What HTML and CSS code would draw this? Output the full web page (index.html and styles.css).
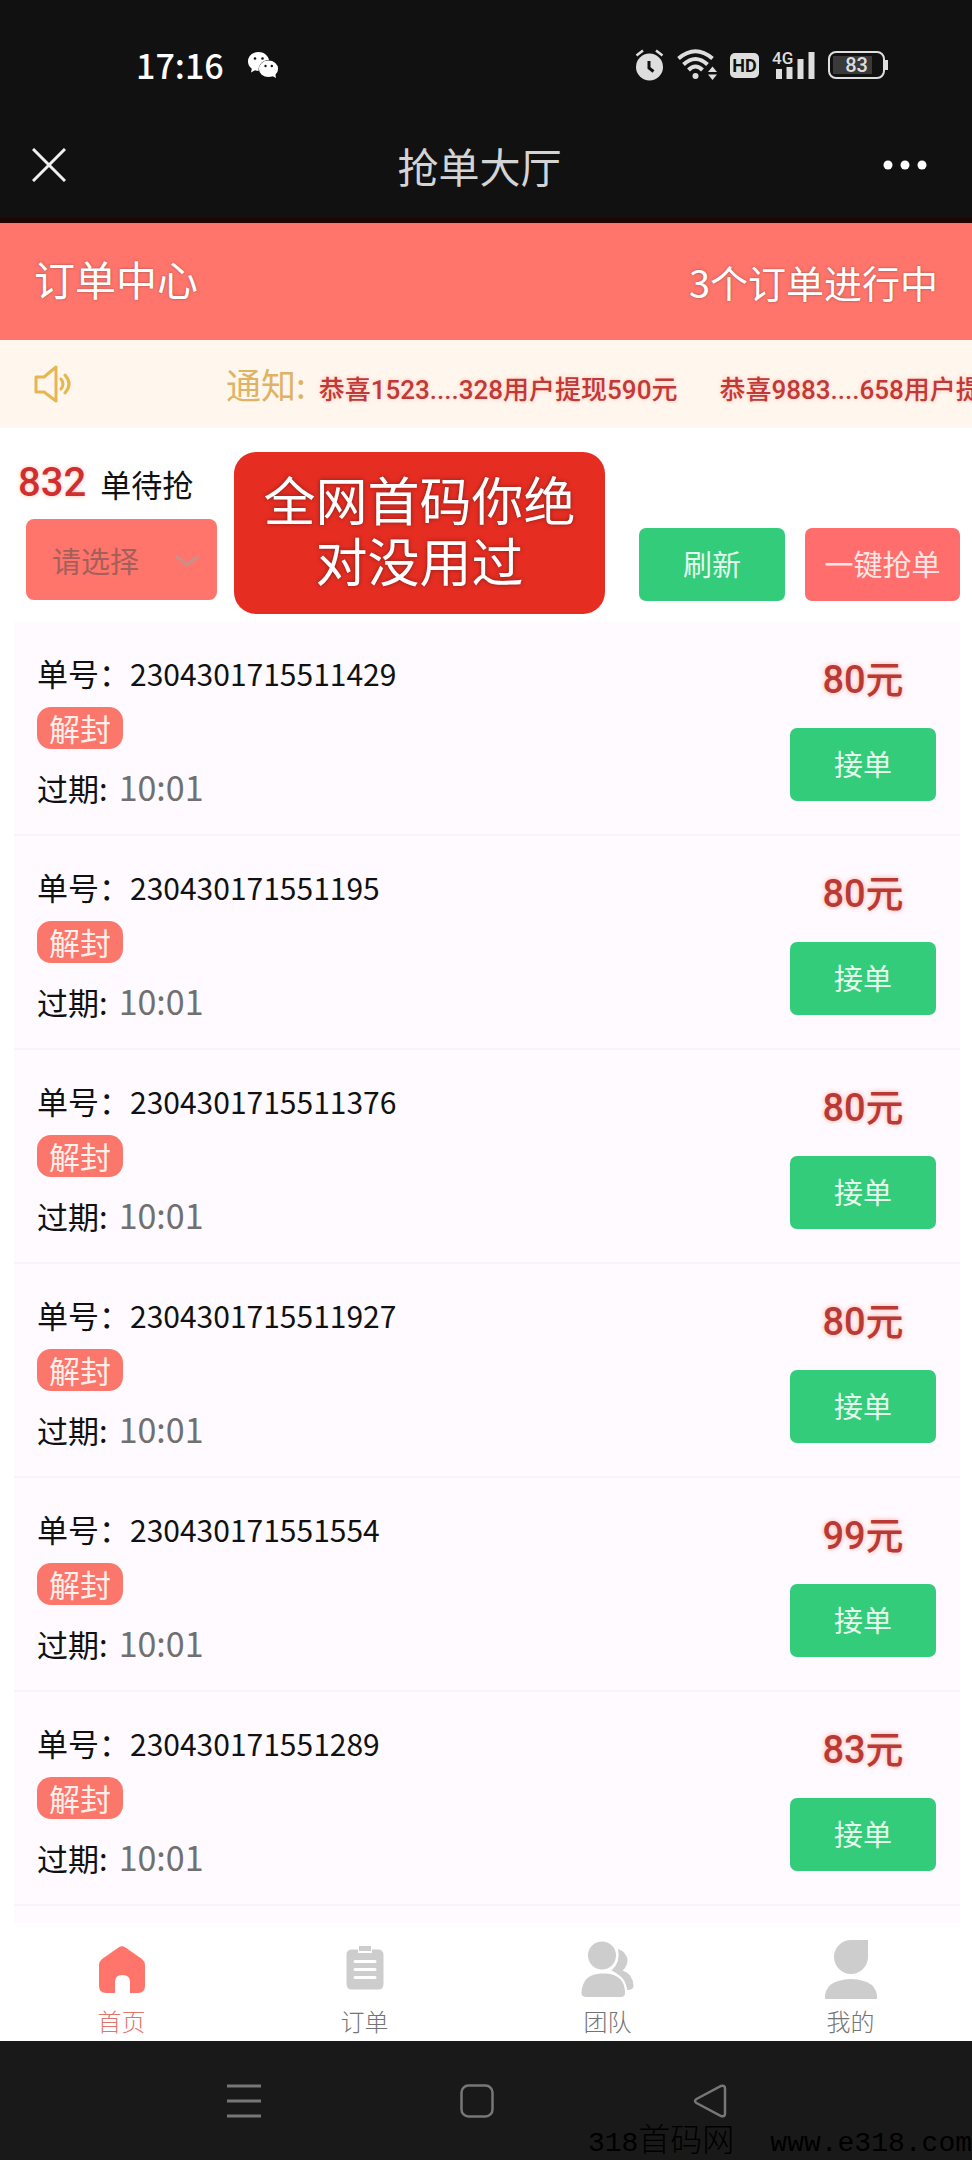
FILE: index.html
```html
<!DOCTYPE html>
<html lang="zh-CN">
<head>
<meta charset="utf-8">
<meta name="viewport" content="width=device-width, initial-scale=1">
<title>抢单大厅</title>
<link rel="stylesheet" href="styles.css">
</head>
<body>
<div class="app">
  <div class="status-bar">
    <time class="clock">17:16</time>
    <svg class="wechat" width="31" height="27" viewBox="0 0 31 27" aria-hidden="true">
      <path fill="#fff" d="M10.500 0C4.700 0 0 4 0 9.500c0 3 1.500 5.600 3.800 7.300L3 20.500l4-2.200c1.200.4 2.400.6 3.700.6C10 13 14.500 8 21 8 20 3.300 15.800 0 10.500 0z"/>
      <ellipse cx="20.500" cy="16.800" rx="9.600" ry="8.300" fill="#fff"/>
      <path fill="#fff" d="M23.500 23.500l4.500 2.500-.8-4.500z"/>
      <g fill="#111"><circle cx="7" cy="6.500" r="1.300"/><circle cx="14.500" cy="6.500" r="1.300"/><circle cx="17.500" cy="14" r="1.200"/><circle cx="23.800" cy="14" r="1.200"/></g>
    </svg>
    <div class="status-icons">
      <svg width="29" height="32" viewBox="0 0 29 32" aria-label="闹钟">
        <circle cx="14.500" cy="18" r="13.500" fill="#dedede"/>
        <path d="M1.500 6.500L8 1.500M27.500 6.500L21 1.500" stroke="#dedede" stroke-width="2.500"/>
        <path d="M14 12v7l4.500 3.500" fill="none" stroke="#111" stroke-width="3"/>
      </svg>
      <svg width="40" height="32" viewBox="0 0 40 32" aria-label="无线网络">
        <g fill="none" stroke="#dedede" stroke-width="4"><path d="M1.500 9.500Q18.500-5 35.500 9.500"/><path d="M6.500 15.500Q18.500 4.500 30.500 15.500"/><path d="M11.500 21Q18.500 14 25.500 21"/></g>
        <circle cx="18.500" cy="27" r="3" fill="#dedede"/>
        <path d="M31 23l4.500-5.500L40 23zM31 25.500l4.500 5.500 4.500-5.500z" fill="#dedede"/>
      </svg>
      <span class="hd">HD</span>
      <svg width="43" height="32" viewBox="0 0 43 32" aria-label="4G 信号">
        <path d="M4 20h6v10H4zM14.500 18h6v12h-6zM25.500 10h6v20h-6zM36.500 3h6v27h-6z" fill="#dedede"/>
        <text class="net" x="0" y="15">4G</text>
      </svg>
      <span class="battery"><span class="battery-level">83</span></span>
    </div>
  </div>

  <header class="title-bar">
    <button class="icon-button" type="button" aria-label="关闭">
      <svg width="34" height="34" viewBox="0 0 34 34"><path d="M1 1l32 32M33 1L1 33" stroke="#f0f0f0" stroke-width="3"/></svg>
    </button>
    <h1 class="page-title">抢单大厅</h1>
    <button class="icon-button more" type="button" aria-label="更多">
      <svg width="44" height="10" viewBox="0 0 44 10" fill="#fff"><circle cx="5" cy="5" r="4.500"/><circle cx="22" cy="5" r="4.500"/><circle cx="39" cy="5" r="4.500"/></svg>
    </button>
  </header>

  <section class="order-head">
    <h2 class="order-title">订单中心</h2>
    <span class="order-progress">3个订单进行中</span>
  </section>

  <section class="notice">
    <svg class="speaker" width="38" height="38" viewBox="0 0 38 38" fill="none" stroke="#e6b650" stroke-width="3" stroke-linejoin="round" stroke-linecap="round" aria-hidden="true">
      <path d="M2 12h8L22 2v34L10 27H2z"/><path d="M27 14q4 5 0 10M31 10q8 9 0 18"/>
    </svg>
    <div class="ticker">
      <span class="ticker-label">通知:</span>
      <span class="ticker-item">恭喜1523....328用户提现590元</span>
      <span class="ticker-item">恭喜9883....658用户提现</span>
    </div>
  </section>

  <section class="filters">
    <div class="filter-left">
      <p class="count"><strong class="count-number">832</strong><span>单待抢</span></p>
      <div class="select-wrap">
        <select class="select" aria-label="请选择"><option>请选择</option></select>
        <svg class="chevron" width="24" height="14" viewBox="0 0 24 14" aria-hidden="true"><path d="M1 2l11 9 11-9" fill="none" stroke="#c9908a" stroke-width="3"/></svg>
      </div>
    </div>
    <p class="banner">全网首码你绝<br>对没用过</p>
    <div class="actions">
      <button class="button refresh" type="button">刷新</button>
      <button class="button grab-all" type="button">一键抢单</button>
    </div>
  </section>

  <main class="orders">
    <article class="order">
      <div class="order-info"><p class="order-id">单号：<span class="number">2304301715511429</span></p><span class="badge">解封</span><p class="expiry">过期:<time class="time">10:01</time></p></div>
      <div class="order-side"><strong class="price">80元</strong><button class="button accept" type="button">接单</button></div>
    </article>
    <article class="order">
      <div class="order-info"><p class="order-id">单号：<span class="number">230430171551195</span></p><span class="badge">解封</span><p class="expiry">过期:<time class="time">10:01</time></p></div>
      <div class="order-side"><strong class="price">80元</strong><button class="button accept" type="button">接单</button></div>
    </article>
    <article class="order">
      <div class="order-info"><p class="order-id">单号：<span class="number">2304301715511376</span></p><span class="badge">解封</span><p class="expiry">过期:<time class="time">10:01</time></p></div>
      <div class="order-side"><strong class="price">80元</strong><button class="button accept" type="button">接单</button></div>
    </article>
    <article class="order">
      <div class="order-info"><p class="order-id">单号：<span class="number">2304301715511927</span></p><span class="badge">解封</span><p class="expiry">过期:<time class="time">10:01</time></p></div>
      <div class="order-side"><strong class="price">80元</strong><button class="button accept" type="button">接单</button></div>
    </article>
    <article class="order">
      <div class="order-info"><p class="order-id">单号：<span class="number">230430171551554</span></p><span class="badge">解封</span><p class="expiry">过期:<time class="time">10:01</time></p></div>
      <div class="order-side"><strong class="price">99元</strong><button class="button accept" type="button">接单</button></div>
    </article>
    <article class="order">
      <div class="order-info"><p class="order-id">单号：<span class="number">230430171551289</span></p><span class="badge">解封</span><p class="expiry">过期:<time class="time">10:01</time></p></div>
      <div class="order-side"><strong class="price">83元</strong><button class="button accept" type="button">接单</button></div>
    </article>
  </main>

  <nav class="tabs">
    <a class="tab tab-active" href="#home">
      <svg width="60" height="60" viewBox="0 0 60 60"><path fill="#ff756b" d="M26.500 7.500q3.500-2.500 7 0L50 19q3 2.500 3 6v21q0 7-7 7h-8V42q0-7-7.500-7T23 42v11h-9q-7 0-7-7V25q0-3.500 3-6z"/></svg>
      <span>首页</span>
    </a>
    <a class="tab" href="#orders">
      <svg width="60" height="60" viewBox="0 0 60 60"><path fill="#cdcdcd" d="M17 9.500h6V13h14V9.500h6q5.500 0 5.500 5.500v29q0 5.500-5.500 5.500H17q-5.500 0-5.500-5.500V15q0-5.500 5.500-5.500z"/><path fill="#cdcdcd" d="M24 6h12v5H24z"/><path d="M20 21.500h20M20 29.500h20M20 37.500h20" stroke="#fff" stroke-width="3" stroke-linecap="round"/></svg>
      <span>订单</span>
    </a>
    <a class="tab" href="#team">
      <svg width="60" height="60" viewBox="0 0 60 60" fill="#cdcdcd"><path d="M40 9q9 3 9.500 11.500-.5 6.500-5 10Q55 34 55.500 46q0 4-6.500 4Q47.500 37 33.500 30.500 43 22 40 9z"/><path d="M23 32.500h5Q48 34 48 53q0 5-5 5H8.500q-6 0-6-5 1-20 20.500-20.500z" stroke="#fff" stroke-width="2"/><circle cx="24" cy="15.500" r="15" stroke="#fff" stroke-width="2"/></svg>
      <span>团队</span>
    </a>
    <a class="tab" href="#me">
      <svg width="60" height="60" viewBox="0 0 60 60" fill="#cdcdcd"><path d="M30 0h17v17a17 17 0 1 1-17-17zM4 59q-1-19 26-20 27 1 26 20z"/></svg>
      <span>我的</span>
    </a>
  </nav>

  <nav class="system-nav" aria-label="系统导航">
    <button class="system-button" type="button" aria-label="最近任务"><svg width="34" height="34" viewBox="0 0 34 34"><path d="M0 2h34M0 17h34M0 32h34" stroke="#777" stroke-width="3"/></svg></button>
    <button class="system-button" type="button" aria-label="主屏幕"><svg width="34" height="34" viewBox="0 0 34 34"><rect x="1.500" y="1.500" width="31" height="31" rx="7" fill="none" stroke="#777" stroke-width="2.500"/></svg></button>
    <button class="system-button" type="button" aria-label="返回"><svg width="34" height="34" viewBox="0 0 34 34"><path d="M3.500 15L28 2q4-1 4 2.500v25q0 3.500-4 2.500L3.500 19q-3-2 0-4z" fill="none" stroke="#777" stroke-width="2.500"/></svg></button>
    <p class="watermark"><span>318<span class="watermark-name">首码网</span></span><span>www.e318.com</span></p>
  </nav>
</div>
</body>
</html>
```

FILE: styles.css
```css
* { box-sizing: border-box; }

body {
  margin: 0;
  background: #fff;
  color: #111;
  font-family: "Noto Sans CJK SC", sans-serif;
}

h1, h2, p { margin: 0; font-weight: 400; }
button, select { font-family: inherit; border: 0; }
svg { display: block; }

.app {
  display: flex;
  flex-direction: column;
  min-height: 100vh;
}

/* Phone status bar */
.status-bar {
  display: flex;
  align-items: center;
  height: 130px;
  padding: 0 87px 0 136px;
  background: #111;
}
.clock { color: #fff; font-size: 34px; font-weight: 500; line-height: 40px; }
.wechat { margin-left: 24px; }
.status-icons {
  display: flex;
  align-items: center;
  gap: 13px;
  margin-left: auto;
}
.hd {
  width: 29px;
  height: 25px;
  border-radius: 5px;
  background: #dedede;
  color: #111;
  font: 700 18px/25px Roboto, sans-serif;
  text-align: center;
}
.net {
  fill: #dedede;
  stroke: #111;
  stroke-width: 3px;
  paint-order: stroke;
  font: 500 17px Roboto, sans-serif;
}
.battery {
  position: relative;
  width: 57px;
  height: 28px;
  padding: 3px;
  border: 2px solid #dedede;
  border-radius: 8px;
}
.battery::after {
  content: "";
  position: absolute;
  top: 7px;
  right: -5px;
  width: 3px;
  height: 10px;
  background: #dedede;
}
.battery-level {
  display: block;
  background: linear-gradient(90deg, #3a3a3a 83%, #111 83%);
  color: #dedede;
  font: 500 20px/18px Roboto, sans-serif;
  text-align: center;
}

/* Title bar */
.title-bar {
  display: grid;
  grid-template-columns: 1fr auto 1fr;
  align-items: center;
  height: 93px;
  padding: 0 45px 18px 32px;
  border-bottom: 5px solid #200500;
  background: #111;
}
.icon-button { justify-self: start; padding: 0; background: none; }
.more { justify-self: end; }
.page-title { color: #d4d4d4; font-size: 41px; line-height: 48px; }

/* Order header */
.order-head {
  display: flex;
  justify-content: space-between;
  height: 117px;
  padding: 29px 34px 0;
  background: #ff756b;
  color: #fff;
  text-shadow: 0 0 3px #a05550;
}
.order-title { font-size: 41px; line-height: 52px; }
.order-progress { font-size: 38px; line-height: 60px; }

/* Notice */
.notice {
  display: flex;
  align-items: center;
  height: 88px;
  padding-left: 34px;
  background: #fff6ee;
}
.speaker { flex: none; }
.ticker {
  display: flex;
  align-items: baseline;
  flex: 1;
  min-width: 0;
  margin-left: 154px;
  overflow: hidden;
  white-space: nowrap;
}
.ticker-label { color: #dfb365; font-size: 35px; line-height: 60px; }
.ticker-item {
  margin: 0 29px 0 13px;
  color: #bf3a36;
  font: 500 26px/48px Roboto, "Noto Sans CJK SC", sans-serif;
  text-shadow: 0 0 4px #ffc0b5;
}

/* Filters */
.filters {
  display: flex;
  padding: 24px 12px 8px 18px;
}
.filter-left { width: 199px; }
.count {
  display: flex;
  align-items: center;
  gap: 14px;
  height: 64px;
  padding-bottom: 2px;
  font-size: 31px;
}
.count-number {
  color: #d02f2f;
  font: 500 40px/48px Roboto, sans-serif;
  text-shadow: 0 0 4px #ffc0b5;
}
.select-wrap { position: relative; margin: 3px 0 0 8px; }
.select {
  width: 100%;
  height: 81px;
  padding: 0 26px;
  border-radius: 8px;
  appearance: none;
  background: #ff756b;
  color: #a55f5a;
  font-size: 29px;
}
.chevron { position: absolute; top: 35px; right: 18px; pointer-events: none; }
.banner {
  width: 371px;
  height: 162px;
  margin-left: 17px;
  padding: 16px 0 0;
  border-radius: 22px;
  background: #e52d22;
  color: #fff;
  font-size: 52px;
  line-height: 61px;
  text-align: center;
  text-shadow: 0 0 4px #80201b;
}
.actions {
  display: flex;
  align-items: flex-end;
  gap: 20px;
  margin-left: auto;
  padding-bottom: 13px;
}
.button {
  width: 146px;
  height: 73px;
  padding: 0 0 4px;
  border-radius: 7px;
  background: #32cc7a;
  color: #e4fbee;
  font-size: 29px;
}
.grab-all { width: 155px; background: #ff6e6c; color: #ffe6e4; }

/* Orders */
.orders {
  flex: 1;
  margin: 0 12px 0 14px;
  background: #fefaff;
}
.order {
  display: flex;
  justify-content: space-between;
  height: 214px;
  padding: 31px 24px 0 23px;
  border-bottom: 2px solid #f9f3f8;
}
.order-info { display: flex; flex-direction: column; align-items: flex-start; }
.order-id { font-size: 31px; line-height: 40px; }
.number { font-size: 30px; }
.badge {
  margin: 14px 0 18px;
  padding: 0 12px;
  border-radius: 14px;
  background: #fb766b;
  color: #fff0ec;
  font-size: 31px;
  line-height: 42px;
}
.expiry { font-size: 31px; line-height: 40px; }
.time { margin-left: 11px; color: #707070; font-size: 34px; }
.order-side { display: flex; flex-direction: column; align-items: center; }
.price {
  margin: 3px 0 24px;
  color: #b93a35;
  font: 500 38px/48px Roboto, "Noto Sans CJK SC", sans-serif;
  text-shadow: 0 0 5px #ffa599;
}

/* Bottom tabs */
.tabs {
  display: grid;
  grid-template-columns: repeat(4, 1fr);
  height: 118px;
  padding-top: 17px;
}
.tab {
  display: flex;
  flex-direction: column;
  align-items: center;
  gap: 6px;
  color: #747474;
  font-size: 24px;
  font-weight: 300;
  line-height: 30px;
  text-decoration: none;
}
.tab-active { color: #df766e; }

/* System navigation */
.system-nav {
  position: relative;
  display: flex;
  align-items: center;
  justify-content: space-around;
  height: 119px;
  padding: 0 146px 0 128px;
  background: #191919;
}
.system-button { padding: 0; background: none; }
.watermark {
  position: absolute;
  right: 0;
  bottom: 0;
  display: flex;
  align-items: baseline;
  gap: 36px;
  color: #000;
  font: 28px/32px "Liberation Mono", "Noto Sans CJK SC", monospace;
}
.watermark-name { font-size: 32px; font-weight: 300; }
```
